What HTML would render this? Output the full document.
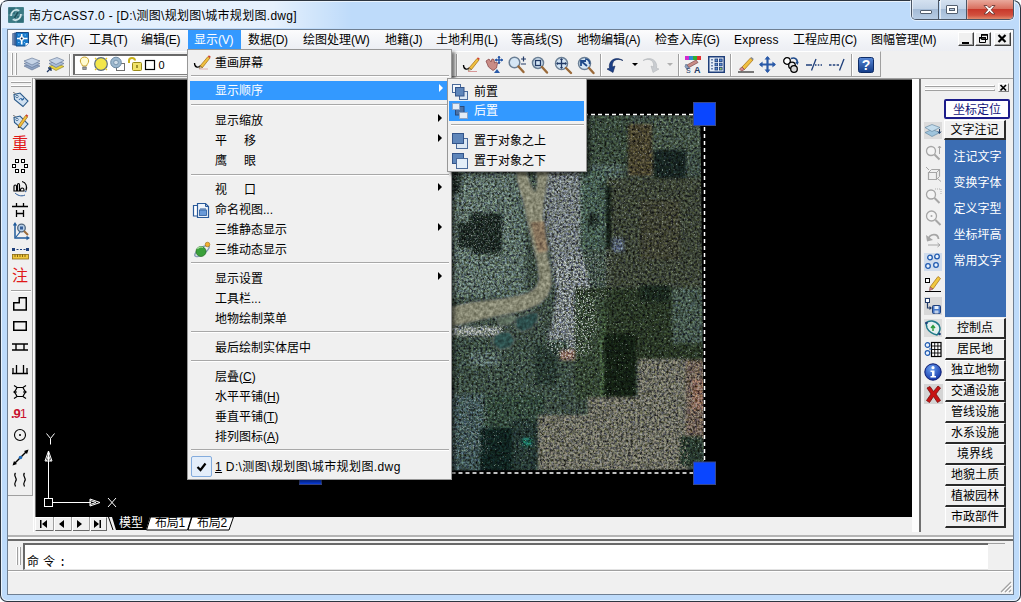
<!DOCTYPE html>
<html lang="zh-CN">
<head>
<meta charset="utf-8">
<title>南方CASS7.0</title>
<style>
*{box-sizing:border-box;margin:0;padding:0}
html,body{width:1021px;height:602px;overflow:hidden;background:#fff}
body{font-family:"Liberation Sans","Noto Sans CJK SC",sans-serif;font-size:12px;color:#000;position:relative}
.abs{position:absolute}
svg{position:absolute;overflow:visible}
#win{position:absolute;left:0;top:0;width:1021px;height:602px;border-radius:8px 8px 7px 7px;background:#bedbfa;overflow:hidden;box-shadow:inset 0 0 0 1px #2d3540, inset 0 0 0 2px #e9f3fd}
#glow{position:absolute;left:2px;top:2px;width:360px;height:26px;background:linear-gradient(90deg,rgba(255,255,255,.55) 0,rgba(255,255,255,.62) 270px,rgba(255,255,255,.3) 310px,rgba(255,255,255,0) 350px)}
#title{position:absolute;left:29px;top:7px;font-size:12px;line-height:18px;white-space:nowrap;letter-spacing:.3px}
#client{position:absolute;left:7px;top:29px;width:1007px;height:566px;background:#f0f0f0;border:1px solid #6f7f92}
#inner{position:absolute;left:8px;top:30px;width:1005px;height:564px}
/* everything below is positioned in page coords inside #pg */
#pg{position:absolute;left:0;top:0;width:1021px;height:602px}
.mi{position:absolute;top:29.500px;height:21px;line-height:20px;white-space:nowrap;font-size:12px;letter-spacing:0}
.mi i{font-style:normal;letter-spacing:-.3px}
.pm{position:absolute;background:#f0f0f0;border:1px solid #979797;box-shadow:3px 3px 3px rgba(0,0,0,.5)}
.pi{position:absolute;left:2px;right:2px;height:19px;line-height:18px;white-space:nowrap;font-size:12px}
.pi .t{position:absolute;left:24px;top:0}
.pi u{text-decoration:underline}
.sep{position:absolute;left:2px;right:2px;height:2px;border-top:1px solid #a8a8a8;border-bottom:1px solid #fff}
.arr{position:absolute;right:7px;top:5px;width:0;height:0;border-left:4px solid #000;border-top:4px solid transparent;border-bottom:4px solid transparent}
.hl{background:#3399ff;color:#fff}
.hl .arr{border-left-color:#fff}
.rb{position:absolute;left:945px;width:61px;height:21px;border-top:1px solid #fff;border-left:1px solid #fff;border-right:2px solid #2a2a2a;border-bottom:2px solid #2a2a2a;background:#f0f0f0;text-align:center;line-height:18px;font-size:12px;white-space:nowrap}
.rl{position:absolute;left:945px;width:60px;text-align:center;color:#fff;font-size:12px;line-height:14px;white-space:nowrap;padding-left:5px}
.vsep{position:absolute;width:2px;border-left:1px solid #a0a0a0;border-right:1px solid #fff}
.red{position:absolute;color:#e01818;font-size:16px;line-height:16px;left:12px;width:16px;text-align:center}
</style>
</head>
<body>
<div id="win">
<div id="glow"></div>
<div id="client"></div>
<div id="pg">
<!-- title bar -->
<svg style="left:8px;top:7px" width="16" height="16" viewBox="0 0 16 16"><rect width="16" height="16" rx="1" fill="#4d8791"/><rect x=".7" y=".7" width="6.800" height="6.800" fill="#2f6e7a"/><rect x="8.500" y="8.500" width="6.800" height="6.800" fill="#2f6e7a"/><rect x="8.500" y=".7" width="6.800" height="6.800" fill="#3b7b86"/><rect x=".7" y="8.500" width="6.800" height="6.800" fill="#3b7b86"/><path d="M8 0v16M0 8h16" stroke="#6a9fa8" stroke-width=".8"/><path d="M3 9c0-4 3-6.500 6.500-6M13 7c0 4-3 6.500-6.500 6" fill="none" stroke="#cfe4e8" stroke-width="1.800"/><path d="M9 2l3 1-2.500 2zM7 14l-3-1 2.500-2z" fill="#cfe4e8"/><path d="M10 5L6.500 11" stroke="#1f4f5a" stroke-width="1.600"/></svg>
<div id="title">南方CASS7.0 - [D:\测图\规划图\城市规划图.dwg]</div>
<!-- caption buttons -->
<div class="abs" style="left:911px;top:0;width:103px;height:20px;border:1px solid #4b5665;border-top:none;border-radius:0 0 5px 5px;overflow:hidden;box-shadow:0 0 0 1px rgba(255,255,255,.55)">
  <div class="abs" style="left:0;top:0;width:27px;height:19px;background:linear-gradient(#d4e1f0 0,#c2d3e7 45%,#a4bbd6 50%,#b7cce4 100%);border-right:1px solid #4b5665;box-shadow:inset 1px 0 0 rgba(255,255,255,.6)"></div>
  <div class="abs" style="left:28px;top:0;width:27px;height:19px;background:linear-gradient(#d4e1f0 0,#c2d3e7 45%,#a4bbd6 50%,#b7cce4 100%);border-right:1px solid #4b5665;box-shadow:inset 1px 0 0 rgba(255,255,255,.6)"></div>
  <div class="abs" style="left:55px;top:0;width:47px;height:19px;background:linear-gradient(#e9a99c 0,#d9705f 45%,#c8392b 50%,#d2503e 80%,#e08a6c 100%);box-shadow:inset 1px 0 0 rgba(255,255,255,.4)"></div>
</div>
<svg style="left:911px;top:0" width="103" height="20" viewBox="0 0 103 20">
  <rect x="9.5" y="10.5" width="11" height="3" rx=".5" fill="#fff" stroke="#535f6f"/>
  <rect x="35.500" y="5.500" width="11" height="8" rx=".5" fill="#fff" stroke="#535f6f"/><rect x="38.500" y="8.500" width="5" height="2" fill="#b9cbe0" stroke="#535f6f"/>
  <path d="M73 5.500h3l2.500 2.500 2.500-2.500h3l-3.800 4.300 3.800 4.200h-3l-2.500-2.600-2.500 2.600h-3l3.800-4.200z" fill="#fff" stroke="#6b3a36" stroke-width=".9"/>
</svg>
<!-- menubar -->
<div class="abs" style="left:8px;top:30px;width:1005px;height:21px;background:linear-gradient(#fcfcfd,#f1f3f7 60%,#eceef3)"></div>
<svg style="left:12px;top:32px" width="18" height="15" viewBox="0 0 18 15"><path d="M.5 1.500h3v11.500h-3z" fill="#8aa0c0" stroke="#4a6490" stroke-width=".6"/><path d="M2 1h3v12H2z" fill="#5a7db0" stroke="#2a4a80" stroke-width=".6"/><path d="M4 .5h12.500v10.500l-3 3H4z" fill="#1878c8" stroke="#174a86" stroke-width="1"/><path d="M16.500 11l-3 3v-3z" fill="#fff"/><path d="M9.700 2v10.500M5 6.500h10.500" stroke="#fff" stroke-width="1.700"/><circle cx="9.700" cy="6.500" r="2.300" fill="#fff"/><circle cx="9.700" cy="6.500" r="1" fill="#102040"/><path d="M6 3h1.500M12.500 3H14M6 10.500h1.500M12 10.500h1" stroke="#7cc4ff" stroke-width="1"/></svg>
<div class="mi" style="left:36px">文件<i>(F)</i></div>
<div class="mi" style="left:89px">工具<i>(T)</i></div>
<div class="mi" style="left:141px">编辑<i>(E)</i></div>
<div class="abs" style="left:187.500px;top:29.500px;width:53px;height:19.500px;background:#3399ff"></div>
<div class="mi" style="left:194px;color:#fff">显示<i>(V)</i></div>
<div class="mi" style="left:248px">数据<i>(D)</i></div>
<div class="mi" style="left:303px">绘图处理<i>(W)</i></div>
<div class="mi" style="left:385px">地籍<i>(J)</i></div>
<div class="mi" style="left:436px">土地利用<i>(L)</i></div>
<div class="mi" style="left:511px">等高线<i>(S)</i></div>
<div class="mi" style="left:577px">地物编辑<i>(A)</i></div>
<div class="mi" style="left:655px">检查入库<i>(G)</i></div>
<div class="mi" style="left:734px"><i style="letter-spacing:.2px">Express</i></div>
<div class="mi" style="left:793px">工程应用<i>(C)</i></div>
<div class="mi" style="left:871px">图幅管理<i>(M)</i></div>
<!-- MDI buttons -->
<div class="abs mdib" style="left:958px;top:32px;width:16px;height:14px"></div>
<div class="abs mdib" style="left:975px;top:32px;width:16px;height:14px"></div>
<div class="abs mdib" style="left:994px;top:32px;width:17px;height:14px"></div>
<style>.mdib{background:#f0f0f0;border:1px solid #fff;border-right-color:#404040;border-bottom-color:#404040;box-shadow:inset -1px -1px 0 #a0a0a0}</style>
<svg style="left:958px;top:32px" width="54" height="14" viewBox="0 0 54 14"><path d="M4 10h7v2H4z" fill="#000"/><path d="M23.500 2.500h6v5h-6z M21.500 5.500h6v5h-6z" fill="#f0f0f0" stroke="#000" stroke-width="1"/><path d="M23 3h7M21 6h7" stroke="#000" stroke-width="1.6"/><path d="M40.500 3l7 7M47.500 3l-7 7" stroke="#000" stroke-width="2.200"/></svg>
<!-- toolbar -->
<div class="abs" style="left:8px;top:51px;width:873px;height:26px;background:#f0f0f0;border-top:1px solid #fff;border-right:1px solid #a0a0a0;border-bottom:1px solid #a0a0a0"></div>
<div class="abs" style="left:881px;top:51px;width:132px;height:27px;background:#f0f0f0"></div>
<div class="abs" style="left:11px;top:53px;width:2px;height:22px;border-left:1px solid #fff;border-right:1px solid #a0a0a0"></div>
<div class="abs" style="left:15px;top:53px;width:2px;height:22px;border-left:1px solid #fff;border-right:1px solid #a0a0a0"></div>
<!-- layers icons -->
<svg style="left:23px;top:56px" width="18" height="16" viewBox="0 0 18 16"><path d="M1 10l8-3 8 3-8 4z" fill="#8fa3c2" stroke="#5a6f90" stroke-width=".6"/><path d="M1 7.500l8-3 8 3-8 4z" fill="#a9bbd6" stroke="#5a6f90" stroke-width=".6"/><path d="M1 5l8-3 8 3-8 4z" fill="#c5d3e6" stroke="#5a6f90" stroke-width=".6"/></svg>
<svg style="left:46px;top:56px" width="18" height="18" viewBox="0 0 18 18"><path d="M3 10.500l8-3 7 3-8 4z" fill="#e8d23c" stroke="#8a7a20" stroke-width=".6"/><path d="M3 7.500l8-3 7 3-8 4z" fill="#a9bbd6" stroke="#5a6f90" stroke-width=".6"/><path d="M3 4.500l8-3 7 3-8 4z" fill="#c5d3e6" stroke="#5a6f90" stroke-width=".6"/><path d="M1 16l4-4M5 12v3M5 12H2" stroke="#203864" stroke-width="1.300" fill="none"/></svg>
<div class="vsep" style="left:69px;top:54px;height:22px"></div>
<!-- layer combo -->
<div class="abs" style="left:73px;top:54px;width:118px;height:21px;background:#fff;border:1px solid #808080;border-top:2px solid #696969;border-left:2px solid #696969"></div>
<svg style="left:79px;top:56px" width="90" height="16" viewBox="0 0 90 16">
 <path d="M5.500 1C2.800 1 1.300 3 1.300 5c0 2 1.700 3 2.200 5h4c.5-2 2.200-3 2.200-5 0-2-1.500-4-4.200-4z" fill="#fffbd0" stroke="#c9a227" stroke-width="1"/><path d="M3.700 11h3.600v2.500H3.700z" fill="#9aa0a8" stroke="#555" stroke-width=".6"/>
 <circle cx="22" cy="8" r="6.300" fill="#f3e64a" stroke="#5a6b80" stroke-width="1.200"/><path d="M16 2l1.500 1.500M28 2l-1.500 1.500M16 14l1.500-1.500M28 14l-1.500-1.500" stroke="#e8c820" stroke-width="1.200"/>
 <rect x="37.500" y="7.500" width="8" height="7" fill="#fff" stroke="#707070"/><circle cx="37" cy="6.500" r="5.300" fill="#9db9cf" stroke="#6d8aa3" stroke-width="1"/><circle cx="37" cy="6.500" r="2.300" fill="#cfdde8" stroke="#6d8aa3" stroke-width=".8"/>
 <path d="M50 7V4.500c0-3.500 6-3.500 6 0" fill="none" stroke="#c9b21a" stroke-width="2"/><rect x="53.500" y="6.500" width="9" height="8" rx="1" fill="#f1e36a" stroke="#9a8a18"/><path d="M58 9v3" stroke="#7a6c10" stroke-width="1.400"/>
 <rect x="66.500" y="4.500" width="9" height="9" fill="#fff" stroke="#000" stroke-width="1.200"/>
</svg>
<div class="abs" style="left:158.500px;top:57px;line-height:17px;font-size:11px">0</div>
<!-- right half of toolbar -->
<div class="vsep" style="left:456px;top:54px;height:22px"></div>
<svg style="left:462px;top:56px" width="18" height="17" viewBox="0 0 18 17"><path d="M1.500 9c0 5 4.500 5 6 2.500" fill="none" stroke="#000" stroke-width="1.300"/><path d="M7 12L15 2.500l2 1.500L9.500 13.500z" fill="#f0c040" stroke="#a06a10" stroke-width=".7"/><path d="M15 2.500l2 1.500 .8-1.200-1.900-1.500z" fill="#d04030"/><path d="M7 12l-.8 2.500 3.300-1z" fill="#e9d7b0" stroke="#70501a" stroke-width=".5"/><path d="M6 15.500h9" stroke="#d08080" stroke-width=".8"/></svg>
<svg style="left:485px;top:56px" width="19" height="18" viewBox="0 0 19 18"><path d="M1 5l3-2 2 3 1-3 2 .5.500 3.500L11 6l1.500 1-1 5-3.500 2.500L3.500 11z" fill="#c98c86" stroke="#8a4a4a" stroke-width=".8"/><path d="M14 0v8M10 4h8" stroke="#2a5aa8" stroke-width="1.500"/><path d="M14 0l-1.700 2h3.400zM14 8l-1.700-2h3.400zM10 4l2-1.700v3.400zM18 4l-2-1.700v3.400z" fill="#2a5aa8"/><path d="M9 17l3-4 3 4z" fill="#2a5aa8"/></svg>
<svg style="left:508px;top:56px" width="19" height="18" viewBox="0 0 19 18"><circle cx="6.500" cy="6.500" r="5.300" fill="#d5e6f5" stroke="#6b7f95" stroke-width="1.500"/><path d="M10.500 10.500l5 5.500" stroke="#9a6a3a" stroke-width="2.400" stroke-linecap="round"/><path d="M13 3h5M15.500 .5v5M13 8h5" stroke="#223a66" stroke-width="1.200"/></svg>
<svg style="left:531px;top:56px" width="18" height="18" viewBox="0 0 18 18"><circle cx="7" cy="7" r="5.500" fill="#d5e6f5" stroke="#6b7f95" stroke-width="1.500"/><rect x="4.500" y="4.500" width="5" height="5" fill="none" stroke="#223a66" stroke-width="1.300"/><path d="M11 11l5 5.500" stroke="#9a6a3a" stroke-width="2.400" stroke-linecap="round"/></svg>
<svg style="left:554px;top:56px" width="19" height="18" viewBox="0 0 19 18"><circle cx="7.500" cy="7.500" r="6" fill="#d5e6f5" stroke="#6b7f95" stroke-width="1.500"/><path d="M7.500 3v9M3 7.500h9" stroke="#223a66" stroke-width="1.300"/><path d="M7.500 2l-1.600 2h3.200zM7.500 13l-1.600-2h3.200zM2 7.500l2-1.600v3.200zM13 7.500l-2-1.600v3.200z" fill="#223a66"/><path d="M12 12l5 5" stroke="#9a6a3a" stroke-width="2.400" stroke-linecap="round"/></svg>
<svg style="left:577px;top:56px" width="18" height="18" viewBox="0 0 18 18"><circle cx="7.500" cy="7.500" r="6" fill="#d5e6f5" stroke="#6b7f95" stroke-width="1.500"/><path d="M4 10V5h5M4 5l6 5" stroke="#1f4a8a" stroke-width="1.800" fill="none"/><path d="M8 3c3 0 5 2 4.500 5" stroke="#1f4a8a" stroke-width="1.600" fill="none"/><path d="M12 12l4.500 5" stroke="#9a6a3a" stroke-width="2.400" stroke-linecap="round"/></svg>
<div class="vsep" style="left:600px;top:54px;height:22px"></div>
<svg style="left:606px;top:57px" width="18" height="16" viewBox="0 0 18 16"><path d="M17 3.500C10 .5 5.500 4 6.500 10l2.500-1-2 6.500L1 12l2.500-.8C2 4 9 -1.500 17 3.500z" fill="#1c3f86" stroke="#10285a" stroke-width=".6"/></svg>
<div class="abs" style="left:632px;top:63px;width:0;height:0;border-top:3px solid #000;border-left:3px solid transparent;border-right:3px solid transparent"></div>
<svg style="left:642px;top:57px" width="18" height="16" viewBox="0 0 18 16"><path d="M1 3.500C8 .5 12.500 4 11.500 10l-2.500-1 2 6.500L17 12l-2.500-.8C16 4 9 -1.500 1 3.500z" fill="#c9ccd0" stroke="#b4b7bb" stroke-width=".6"/></svg>
<div class="abs" style="left:667px;top:63px;width:0;height:0;border-top:3px solid #b0b0b0;border-left:3px solid transparent;border-right:3px solid transparent"></div>
<div class="vsep" style="left:678px;top:54px;height:22px"></div>
<svg style="left:684px;top:56px" width="18" height="17" viewBox="0 0 18 17"><rect x="1" y="0" width="4" height="4" fill="#d02ad0"/><rect x="5" y="0" width="4" height="4" fill="#2a8ad0"/><rect x="9" y="0" width="4" height="4" fill="#30b030"/><rect x="13" y="0" width="4" height="4" fill="#e03030"/><path d="M3 9l9-5 2 2.500-9 5z" fill="#c98c86" stroke="#7a4a4a" stroke-width=".7"/><path d="M2 8l3 4-2 1.500-2-3z" fill="#8fa3c2" stroke="#4a5f80" stroke-width=".6"/><text x="2" y="16.500" font-size="7" font-family="Liberation Sans,sans-serif" fill="#223a66">S</text><text x="10" y="16.500" font-size="9" font-family="Liberation Sans,sans-serif" font-weight="bold" fill="#223a66">A</text></svg>
<svg style="left:708px;top:56px" width="17" height="17" viewBox="0 0 17 17"><rect x=".75" y=".75" width="15.500" height="15.500" fill="#e6eef8" stroke="#1f3f7a" stroke-width="1.500"/><path d="M4 3v11" stroke="#1f3f7a" stroke-width="1.200" stroke-dasharray="1.500 1.500"/><g fill="#5a8ad0" stroke="#1f3f7a" stroke-width=".8"><rect x="7" y="3" width="2.600" height="2.600"/><rect x="11.500" y="3" width="2.600" height="2.600"/><rect x="7" y="7.200" width="2.600" height="2.600"/><rect x="11.500" y="7.200" width="2.600" height="2.600"/><rect x="7" y="11.400" width="2.600" height="2.600"/><rect x="11.500" y="11.400" width="2.600" height="2.600" fill="#9ad06a"/></g></svg>
<div class="vsep" style="left:730px;top:54px;height:22px"></div>
<svg style="left:737px;top:56px" width="18" height="17" viewBox="0 0 18 17"><path d="M5 11L13.500 2l2.500 2-8.500 9.500z" fill="#f0c040" stroke="#a06a10" stroke-width=".7"/><path d="M5 11l2.500 2.500-3 1.500-2-2z" fill="#d78a8a" stroke="#8a4a4a" stroke-width=".7"/><path d="M13.500 2l2.500 2 .8-1-2.400-2z" fill="#808890"/><path d="M1 16h16" stroke="#000" stroke-width="1"/></svg>
<svg style="left:759px;top:56px" width="17" height="17" viewBox="0 0 17 17"><path d="M8.500 1v15M1 8.500h15" stroke="#2a5aa8" stroke-width="2.200"/><path d="M8.500 0l-3 3.600h6zM8.500 17l-3-3.600h6zM0 8.500l3.600-3v6zM17 8.500l-3.600-3v6z" fill="#2a5aa8"/></svg>
<svg style="left:782px;top:56px" width="18" height="17" viewBox="0 0 18 17"><circle cx="5" cy="5" r="3.300" fill="#fff" stroke="#000" stroke-width="1.300"/><circle cx="10" cy="9.500" r="3.300" fill="#e8e8e8" stroke="#000" stroke-width="1.300"/><circle cx="12" cy="13" r="3.300" fill="#d8d8d8" stroke="#000" stroke-width="1.300"/><path d="M9 2.500c4-1.500 7 1 6 4.500" stroke="#1f4a8a" stroke-width="1.600" fill="none"/><path d="M15.500 9l-2.300-2.800 3.600-.4z" fill="#1f4a8a"/></svg>
<svg style="left:805px;top:57px" width="18" height="15" viewBox="0 0 18 15"><path d="M1 8h6" stroke="#1f3f7a" stroke-width="1.300"/><path d="M10 8h7" stroke="#1f3f7a" stroke-width="1.300" stroke-dasharray="1.500 1.300"/><path d="M6.500 13.500L11 2" stroke="#1f3f7a" stroke-width="1.300"/></svg>
<svg style="left:828px;top:57px" width="18" height="15" viewBox="0 0 18 15"><path d="M1 8h10" stroke="#1f3f7a" stroke-width="1.300" stroke-dasharray="2.500 1.300"/><path d="M11.500 13.500L16 2" stroke="#1f3f7a" stroke-width="1.300"/></svg>
<div class="vsep" style="left:851px;top:54px;height:22px"></div>
<svg style="left:858px;top:57px" width="16" height="16" viewBox="0 0 16 16"><defs><linearGradient id="hg" x1="0" y1="0" x2="0" y2="1"><stop offset="0" stop-color="#5a8ad8"/><stop offset="1" stop-color="#123a86"/></linearGradient></defs><rect x=".5" y=".5" width="15" height="15" rx="2" fill="url(#hg)" stroke="#0e2c66"/><text x="8" y="13" text-anchor="middle" font-size="14" font-weight="bold" font-family="Liberation Sans,sans-serif" fill="#fff">?</text></svg>
<!-- drawing area -->
<div class="abs" style="left:33px;top:78px;width:881px;height:454px;background:#f0f0f0;border-top:1px solid #a0a0a0;border-left:1px solid #fff"></div>
<div class="abs" style="left:35px;top:79px;width:877px;height:438px;background:#000;border-top:1px solid #6a6a6a;border-left:1px solid #6a6a6a" id="cv"></div>
<!-- UCS icon -->
<svg style="left:35px;top:425px" width="100" height="92" viewBox="0 0 100 92"><g fill="none" stroke="#fff" stroke-width="1"><rect x="9.500" y="73.500" width="8" height="8"/><path d="M13.500 73V27M17.500 77.500H56"/><path d="M13.500 26l-3.500 10h7zM13.500 30l-2 6M13.500 30l2 6"/><path d="M65 77.500l-10-3.500v7zM61 77.500l-6-2M61 77.500l-6 2"/><path d="M11.500 8.500l4 5 4-5M15.500 13.500v6"/><path d="M73 73l8 9M81 73l-8 9"/></g></svg>
<!-- tab strip -->
<div class="abs" style="left:35px;top:517px;width:72px;height:14px;background:#f0f0f0;border:1px solid #fff;border-right-color:#696969;border-bottom-color:#696969"></div>
<svg style="left:35px;top:517px" width="210" height="14" viewBox="0 0 210 14">
 <path d="M18.500 0v14M36.500 0v14M54.500 0v14" stroke="#a0a0a0"/><path d="M19.500 0v14M37.500 0v14M55.500 0v14" stroke="#fff"/>
 <path d="M5 3v8h1.500V3zM12 3v8L7 7z M29 3v8L24 7z M42 3v8l5-4z M59 3v8l5-4zM64.500 3v8H66V3z" fill="#000"/>
 <path d="M77 0l4 13h30l4-13z" fill="#000"/>
 <path d="M115.500 0l-4 13h41l4-13z M157 0l-4 13h41l4.500-13z" fill="#fff" stroke="#000" stroke-width="1"/>
 <path d="M73.500 0l4.500 13" stroke="#000"/>
</svg>
<div class="abs" style="left:119px;top:516px;line-height:14px;font-size:12px;color:#fff">模型</div>
<div class="abs" style="left:155px;top:516px;line-height:14px;font-size:12px;letter-spacing:-.3px">布局1</div>
<div class="abs" style="left:197px;top:516px;line-height:14px;font-size:12px;letter-spacing:-.3px">布局2</div>
<!-- splitter & command area -->
<div class="abs" style="left:8px;top:532px;width:1005px;height:62px;background:#f0f0f0"></div>
<div class="abs" style="left:8px;top:535px;width:1005px;height:6px;border-top:2px solid #b4b4b4;border-bottom:2px solid #6a6a6a;background:#fafafa"></div>
<div class="abs" style="left:16px;top:547px;width:2px;height:18px;border-left:1px solid #fff;border-right:1px solid #a0a0a0"></div>
<div class="abs" style="left:19px;top:547px;width:2px;height:18px;border-left:1px solid #fff;border-right:1px solid #a0a0a0"></div>
<div class="abs" style="left:23px;top:543px;width:965px;height:27px;background:#fff;border-top:2px solid #696969;border-left:2px solid #696969;border-bottom:1px solid #e3e3e3"></div>
<div class="abs" style="left:988px;top:543px;width:17px;height:27px;background:#f0f0f0;border-top:1px solid #a0a0a0"></div>
<div class="abs" style="left:27px;top:556px;font-size:12px;line-height:14px;letter-spacing:4px;font-family:'Liberation Mono','Noto Sans CJK SC',monospace">命令:</div>
<div class="abs" style="left:8px;top:570px;width:1005px;height:1px;background:#a0a0a0"></div>
<div class="abs" style="left:8px;top:571px;width:1005px;height:1px;background:#fff"></div>
<svg style="left:1000px;top:581px" width="12" height="12" viewBox="0 0 12 12"><path d="M11 1L1 11M11 5L5 11M11 9l-2 2" stroke="#a0a0a0" stroke-width="1.200"/><path d="M12 2L2 12M12 6l-6 6M12 10l-2 2" stroke="#fff" stroke-width="1"/></svg>
<!-- left toolbar -->
<div class="abs" style="left:8px;top:78px;width:25px;height:418px;background:#f0f0f0;border-right:1px solid #a0a0a0;border-bottom:1px solid #a0a0a0"></div>
<div class="abs" style="left:11px;top:81px;width:20px;height:2px;border-top:1px solid #fff;border-bottom:1px solid #a0a0a0"></div>
<div class="abs" style="left:11px;top:85px;width:20px;height:2px;border-top:1px solid #fff;border-bottom:1px solid #a0a0a0"></div>
<svg style="left:12px;top:91px" width="17" height="17" viewBox="0 0 17 17"><path d="M2 3.500L8 2l8 8-5 5.500-8.500-7z" fill="#cfe0f0" stroke="#2a5a8a" stroke-width="1.100"/><circle cx="5" cy="5.500" r="1.200" fill="#fff" stroke="#2a5a8a" stroke-width=".8"/><path d="M7 9c1-2 3-2 4 0M11 9l.500-2M11 9l-2-.3" stroke="#1f5a9a" stroke-width="1" fill="none"/><path d="M1 1.500c1 0 2 .5 3 2" stroke="#555" stroke-width=".8" fill="none"/></svg>
<svg style="left:12px;top:113px" width="17" height="18" viewBox="0 0 17 18"><path d="M2 4.500L8 3l8 8-5 5.500-8.500-7z" fill="#cfe0f0" stroke="#2a5a8a" stroke-width="1.100"/><circle cx="5" cy="6.500" r="1.200" fill="#fff" stroke="#2a5a8a" stroke-width=".8"/><path d="M6 13L13.500 2.500l2 1.500L8 14.500z" fill="#f0c040" stroke="#a06a10" stroke-width=".7"/><path d="M13.500 2.500l2 1.500.8-1.300-1.900-1.400z" fill="#d04030"/><path d="M6 13l-.3 2.300 2.300-.8z" fill="#333"/><path d="M1 2.500c1 0 2 .5 3 2" stroke="#555" stroke-width=".8" fill="none"/></svg>
<div class="red" style="top:136px">重</div>
<svg style="left:12px;top:158px" width="16" height="16" viewBox="0 0 16 16"><g fill="#fff" stroke="#000" stroke-width="1"><rect x="3.500" y="1.500" width="3" height="3"/><rect x="9.500" y="1.500" width="3" height="3"/><rect x=".5" y="6.500" width="3" height="3"/><rect x="12.500" y="6.500" width="3" height="3"/><rect x="3.500" y="11.500" width="3" height="3"/><rect x="9.500" y="11.500" width="3" height="3"/></g></svg>
<svg style="left:12px;top:180px" width="17" height="17" viewBox="0 0 17 17"><path d="M2 11V6.500c0-2 2.500-2 2.500 0V11zM5.500 11V5c0-2 2-2 2 0v6zM8.500 11c-.5-4 4-4 3.500 0z" fill="#fff" stroke="#000" stroke-width="1.200"/><path d="M10 1.500c4 1 5.500 5 4 9" stroke="#000" stroke-width="1.200" fill="none"/><path d="M13 15c-4 2-8 0-10-2" stroke="#2a5a9a" stroke-width="1" fill="none"/><path d="M14.500 11l-2.200-.5 1.500 2z" fill="#2a5a9a"/></svg>
<svg style="left:12px;top:202px" width="16" height="16" viewBox="0 0 16 16"><path d="M0 4.500h16M4.500 1v3.500M11.500 1v3.500M4.500 8v7M11.500 8v7M4.500 11.500h7" stroke="#000" stroke-width="1.300" fill="none"/></svg>
<svg style="left:12px;top:222px" width="18" height="19" viewBox="0 0 18 19"><path d="M3 2v14h13" stroke="#1f5a9a" stroke-width="1.500" fill="none"/><path d="M3 0L.8 3.500h4.400zM18 16l-3.500-2.200v4.400z" fill="#1f5a9a"/><circle cx="9.500" cy="6" r="3.800" fill="#b5cde6" stroke="#51677f" stroke-width="1.300"/><rect x="8" y="4.500" width="3" height="3" fill="#355f9a"/><path d="M12 9l4 4" stroke="#9a6a3a" stroke-width="2"/><path d="M4 15l4-5" stroke="#1f5a9a" stroke-width="1.200"/></svg>
<svg style="left:12px;top:246px" width="17" height="14" viewBox="0 0 17 14"><path d="M1 3.500h15" stroke="#1f3f7a" stroke-width="1.200" stroke-dasharray="2 1.500"/><rect x="0" y="2" width="3" height="3" fill="#1f3f7a"/><rect x="14" y="2" width="3" height="3" fill="#1f3f7a"/><rect x=".5" y="8.500" width="16" height="4.500" fill="#f0c840" stroke="#8a6a10" stroke-width=".8"/><path d="M3 8.500v2.500M5.500 8.500v2.500M8 8.500v2.500M10.500 8.500v2.500M13 8.500v2.500" stroke="#6a4a00" stroke-width=".8"/></svg>
<div class="red" style="top:268px">注</div>
<div class="abs" style="left:11px;top:290px;width:20px;height:2px;border-top:1px solid #a0a0a0;border-bottom:1px solid #fff"></div>
<svg style="left:12px;top:296px" width="16" height="36" viewBox="0 0 16 36"><path d="M1.750 14V6.750h5.500V1.750h7V14z" fill="none" stroke="#000" stroke-width="1.500"/><rect x="1.750" y="25.750" width="12.500" height="8.500" fill="none" stroke="#000" stroke-width="1.500"/></svg>
<svg style="left:12px;top:342px" width="16" height="34" viewBox="0 0 16 34"><path d="M0 2h16M0 8h16M4 2v6M12 2v6" stroke="#000" stroke-width="1.400" fill="none"/><path d="M0 31.500h16M4.500 23v8M11.500 23v8M1 26v5M15 26v5" stroke="#000" stroke-width="1.300" fill="none"/></svg>
<svg style="left:12px;top:384px" width="16" height="16" viewBox="0 0 16 16"><path d="M2 1.500l3 2h6l3-2M5 3.500c-1 2-1 3-3 4.500 2 1.500 2 2.500 3 4.500M11 3.500c1 2 1 3 3 4.500-2 1.500-2 2.500-3 4.500M2 14.500l3-2h6l3 2M2 8h3M11 8h3" stroke="#000" stroke-width="1.200" fill="none"/></svg>
<div class="abs" style="left:11px;top:406px;font-size:13px;line-height:15px;font-weight:bold;color:#c8102e;letter-spacing:-1px;font-family:'Liberation Sans',sans-serif">.9<span style="font-weight:normal">1</span></div>
<svg style="left:13px;top:428px" width="14" height="14" viewBox="0 0 14 14"><circle cx="7" cy="7" r="5.500" fill="none" stroke="#000" stroke-width="1.100"/><circle cx="7" cy="7" r="1" fill="#000"/></svg>
<svg style="left:12px;top:449px" width="17" height="17" viewBox="0 0 17 17"><path d="M2 15L15 2" stroke="#000" stroke-width="1.500"/><path d="M16.500 .5l-4.500 1.500 3 3zM.5 16.500l4.500-1.500-3-3z" fill="#000"/><circle cx="8.500" cy="8.500" r="1.800" fill="#1f6ab8"/></svg>
<svg style="left:12px;top:472px" width="16" height="16" viewBox="0 0 16 16"><path d="M3.500 1c-3 3.500 3 5 0 8.500-1 1.500-1 3 0 5M12.500 1c-3 3.500 3 5 0 8.500-1 1.500-1 3 0 5" stroke="#000" stroke-width="1.200" fill="none"/></svg>
<!-- right panel -->
<div class="abs" style="left:913px;top:78px;width:100px;height:454px;background:#f0f0f0;border-top:1px solid #a0a0a0"></div>
<div class="abs" style="left:912px;top:79px;width:7px;height:453px;background:#fcfcfc"></div><div class="abs" style="left:919px;top:79px;width:1.500px;height:453px;background:#707070"></div>
<div class="abs" style="left:925px;top:85px;width:70px;height:2px;border-top:1px solid #fff;border-bottom:1px solid #a0a0a0;border-right:1px solid #a0a0a0"></div>
<div class="abs" style="left:925px;top:89px;width:70px;height:2px;border-top:1px solid #fff;border-bottom:1px solid #a0a0a0;border-right:1px solid #a0a0a0"></div>
<div class="abs" style="left:998px;top:83px;width:11px;height:9px;border-right:1px solid #808080;border-bottom:1px solid #808080;border-top:1px solid #fff;border-left:1px solid #fff"></div>
<svg style="left:999px;top:84px" width="9" height="8" viewBox="0 0 9 8"><path d="M1.500 1l5.500 5.500M7 1L1.500 6.500" stroke="#000" stroke-width="1.700"/></svg>
<div class="abs" style="left:944px;top:99px;width:66px;height:20px;background:#fff;border:2px solid #1c1c8a;border-radius:2px;color:#14147a;text-align:center;line-height:18px;font-size:12px">坐标定位</div>
<div class="rb" style="top:120px;left:944px;width:62px;height:20px">文字注记</div>
<div class="abs" style="left:945px;top:140px;width:61px;height:177px;background:#3b6db3"></div>
<div class="rl" style="top:150px">注记文字</div>
<div class="rl" style="top:176px">变换字体</div>
<div class="rl" style="top:202px">定义字型</div>
<div class="rl" style="top:228px">坐标坪高</div>
<div class="rl" style="top:254px">常用文字</div>
<div class="rb" style="top:318px">控制点</div>
<div class="rb" style="top:339px">居民地</div>
<div class="rb" style="top:360px">独立地物</div>
<div class="rb" style="top:381px">交通设施</div>
<div class="rb" style="top:402px">管线设施</div>
<div class="rb" style="top:423px">水系设施</div>
<div class="rb" style="top:444px">境界线</div>
<div class="rb" style="top:465px">地貌土质</div>
<div class="rb" style="top:486px">植被园林</div>
<div class="rb" style="top:507px">市政部件</div>
<!-- right icon column -->
<div class="abs" style="left:924px;top:122px;width:18px;height:17px;background:#dcdcdc"></div>
<svg style="left:924px;top:122px" width="18" height="17" viewBox="0 0 18 17"><path d="M1 10.500l7-3 8 3-8 4z" fill="#9fc4dc" stroke="#5a7f9a" stroke-width=".6"/><path d="M1 5.500l7-3 8 3-8 4z" fill="#c3dcec" stroke="#5a7f9a" stroke-width=".6"/><path d="M15.500 7v4M14 9.500l1.500 2 1.500-2" stroke="#1f3f6a" stroke-width="1" fill="none"/></svg>
<svg style="left:925px;top:145px" width="17" height="16" viewBox="0 0 17 16"><circle cx="6" cy="6" r="4.500" fill="#f4f4f4" stroke="#a6a6a6" stroke-width="1.300"/><path d="M9.500 9.500l5 5" stroke="#a6a6a6" stroke-width="2"/><path d="M14.500 1v8M13 3l1.500-2 1.500 2" stroke="#a6a6a6" stroke-width="1" fill="none"/></svg>
<svg style="left:925px;top:166px" width="17" height="16" viewBox="0 0 17 16"><path d="M3.500 6.500h8v7h-8zM6.500 3.500h8v7" fill="none" stroke="#a6a6a6" stroke-width="1.200"/><path d="M3.500 6.500l3-3M11.500 6.500l3-3M11.500 13.500l3-3" stroke="#a6a6a6" stroke-width="1"/><path d="M1 1l3 3M13 13l3 2.500" stroke="#a6a6a6" stroke-width="1"/></svg>
<svg style="left:925px;top:188px" width="17" height="16" viewBox="0 0 17 16"><circle cx="6" cy="6.500" r="4.500" fill="#f4f4f4" stroke="#a6a6a6" stroke-width="1.300"/><path d="M9.500 10l5 5" stroke="#a6a6a6" stroke-width="2"/><path d="M10 1h6v6" stroke="#b0b0b0" stroke-width="1" stroke-dasharray="1 1" fill="none"/></svg>
<svg style="left:925px;top:210px" width="17" height="16" viewBox="0 0 17 16"><circle cx="6.500" cy="6" r="5" fill="#f4f4f4" stroke="#a6a6a6" stroke-width="1.300"/><circle cx="6.500" cy="6" r="1" fill="#a6a6a6"/><path d="M10.500 10l5 5" stroke="#a6a6a6" stroke-width="2"/></svg>
<svg style="left:925px;top:232px" width="17" height="15" viewBox="0 0 17 15"><path d="M3 7.500C5 1 13 1 13.500 7" stroke="#a6a6a6" stroke-width="1.800" fill="none"/><path d="M1 3l1 6.500L8 8z" fill="#a6a6a6"/><path d="M3 13h12M12.500 11l2.500 2-2.500 2" stroke="#a6a6a6" stroke-width="1" fill="none"/></svg>
<div class="abs" style="left:924px;top:253px;width:18px;height:18px;background:#d0dcec"></div>
<svg style="left:924px;top:253px" width="18" height="18" viewBox="0 0 18 18"><g fill="#e8f0fa" stroke="#1f5ab0" stroke-width="1.300"><circle cx="6" cy="4.500" r="2.300"/><circle cx="13" cy="3.500" r="2.300"/><circle cx="4" cy="13" r="2.300"/><circle cx="12" cy="12" r="2.300"/></g></svg>
<svg style="left:924px;top:275px" width="18" height="18" viewBox="0 0 18 18"><rect x="1.500" y="3.500" width="4" height="4" fill="#fff" stroke="#000"/><path d="M6 12L14 1.500l2.500 2L9 14z" fill="#f0c840" stroke="#a06a10" stroke-width=".7"/><path d="M6 12l3 2-3.500 1.500z" fill="#d78a8a" stroke="#8a4a4a" stroke-width=".6"/><path d="M1 16.500h16" stroke="#000" stroke-width="1"/></svg>
<div class="abs" style="left:924px;top:297px;width:18px;height:18px;background:#d8d8d8"></div>
<svg style="left:924px;top:297px" width="18" height="18" viewBox="0 0 18 18"><rect x="1.500" y="1.500" width="4" height="4" fill="#fff" stroke="#223a66"/><path d="M3.500 6v5h3" stroke="#223a66" stroke-width="1.200" fill="none"/><path d="M8 9l-2.500 2L8 13z" fill="#223a66" transform="rotate(180 6.750 11)"/><rect x="8.500" y="8.500" width="8" height="8" rx="1" fill="#4a7ac8" stroke="#1f3f7a"/><rect x="10.500" y="9" width="4" height="3" fill="#e8f0fa"/><rect x="10.500" y="13.500" width="4" height="3" fill="#c0d0e8"/></svg>
<div class="abs" style="left:924px;top:319px;width:18px;height:18px;background:#dcdcdc"></div>
<svg style="left:924px;top:319px" width="18" height="18" viewBox="0 0 18 18"><path d="M2 4c3-3 9-3 13 2 2 4 0 8-2 10-4-1-8-3-10-7z" fill="#e4f0f0" stroke="#1f7a8a" stroke-width="1.500"/><path d="M9 12V7M7 9l2-2.500L11 9" stroke="#2a9a3a" stroke-width="1.400" fill="none"/><circle cx="2.500" cy="4" r="1.300" fill="#1f3f7a"/><circle cx="15.500" cy="15" r="1.300" fill="#1f3f7a"/></svg>
<svg style="left:924px;top:341px" width="18" height="17" viewBox="0 0 18 17"><circle cx="3.500" cy="4" r="2.300" fill="#e8f0fa" stroke="#1f5ab0" stroke-width="1.200"/><circle cx="3.500" cy="12" r="2.300" fill="#e8f0fa" stroke="#1f5ab0" stroke-width="1.200"/><rect x="7.500" y="1.500" width="9.500" height="14" fill="#fff" stroke="#000" stroke-width="1.200"/><path d="M8 5h9M8 8.500h9M8 12h9M10.700 2v13M13.900 2v13" stroke="#000" stroke-width=".9"/><path d="M5 8h2.500" stroke="#1f5ab0"/></svg>
<svg style="left:924px;top:363px" width="18" height="18" viewBox="0 0 18 18"><defs><radialGradient id="ig" cx=".4" cy=".3" r=".8"><stop offset="0" stop-color="#6aa0f0"/><stop offset="1" stop-color="#0a2aa0"/></radialGradient></defs><circle cx="9" cy="9" r="8.200" fill="url(#ig)" stroke="#0a1a70" stroke-width="1"/><circle cx="9" cy="4.700" r="1.600" fill="#fff"/><path d="M6.500 7.500h4v5.500h1.500v1.500h-5.500v-1.500h1.500v-4h-1.500z" fill="#fff"/></svg>
<div class="abs" style="left:924px;top:384px;width:19px;height:20px;background:#d4d4d4"></div>
<svg style="left:924px;top:384px" width="19" height="20" viewBox="0 0 19 20"><path d="M3 4l3-1.500 3.500 5L14 2l2.500 2-4.500 6 4.500 6.500-3 2-4-6-4 6-3-2 4.500-6.500z" fill="#c81414" stroke="#7a0a0a" stroke-width=".8"/></svg>
<!-- raster image object on canvas (approximated) -->
<svg style="left:0;top:0" width="1021" height="602" viewBox="0 0 1021 602">
<defs>
  <clipPath id="imgclip"><path d="M311 115.500H700.500L704 469.500 311 471z"/></clipPath>
  <filter id="b3" x="-20%" y="-20%" width="140%" height="140%"><feGaussianBlur stdDeviation="2.200"/></filter>
  <filter id="b1" x="-20%" y="-20%" width="140%" height="140%"><feGaussianBlur stdDeviation="1"/></filter>
  <filter id="tex" filterUnits="userSpaceOnUse" x="300" y="105" width="420" height="380" color-interpolation-filters="sRGB">
    <feGaussianBlur in="SourceGraphic" stdDeviation="1.600" result="b"/>
    <feTurbulence type="fractalNoise" baseFrequency=".42" numOctaves="3" seed="3" result="n"/>
    <feColorMatrix in="n" type="matrix" values="1.050 .2 0 0 -.15  1.050 .2 0 0 -.15  1.050 0 .2 0 -.15  0 0 0 0 1" result="g"/>
    <feBlend in="g" in2="b" mode="overlay" result="o"/>
    <feColorMatrix in="o" type="saturate" values="1.2" result="o2"/>
    <feComponentTransfer in="o2"><feFuncR type="linear" slope=".94"/><feFuncG type="linear" slope=".94"/><feFuncB type="linear" slope=".94"/></feComponentTransfer>
  </filter>
  <filter id="wtr" filterUnits="userSpaceOnUse" x="300" y="105" width="420" height="380" color-interpolation-filters="sRGB">
    <feGaussianBlur in="SourceGraphic" stdDeviation=".9" result="b"/>
    <feTurbulence type="fractalNoise" baseFrequency=".3" numOctaves="2" seed="9" result="n"/>
    <feColorMatrix in="n" type="matrix" values=".5 0 0 0 .25  .5 0 0 0 .25  .5 0 0 0 .25  0 0 0 0 1" result="g"/>
    <feBlend in="g" in2="b" mode="overlay" result="o"/>
    <feComposite in="o" in2="b" operator="in"/>
  </filter>
  <filter id="spW" filterUnits="userSpaceOnUse" x="300" y="105" width="420" height="380" color-interpolation-filters="sRGB">
    <feTurbulence type="fractalNoise" baseFrequency=".55" numOctaves="2" seed="7" result="n"/>
    <feColorMatrix in="n" type="matrix" values="0 0 0 0 .8  0 0 0 0 .84  0 0 0 0 .82  10 0 0 0 -6.800"/>
  </filter>
  <filter id="spW2" filterUnits="userSpaceOnUse" x="300" y="105" width="420" height="380" color-interpolation-filters="sRGB">
    <feTurbulence type="fractalNoise" baseFrequency=".6" numOctaves="2" seed="23" result="n"/>
    <feColorMatrix in="n" type="matrix" values="0 0 0 0 .86  0 0 0 0 .88  0 0 0 0 .88  0 8 0 0 -4.500"/>
  </filter>
  <filter id="spT" filterUnits="userSpaceOnUse" x="300" y="105" width="420" height="380" color-interpolation-filters="sRGB">
    <feTurbulence type="fractalNoise" baseFrequency=".45" numOctaves="2" seed="5" result="n"/>
    <feColorMatrix in="n" type="matrix" values="0 0 0 0 .62  0 0 0 0 .59  0 0 0 0 .53  0 6 0 0 -3.200"/>
  </filter>
  <mask id="urban"><rect x="300" y="100" width="420" height="380" fill="#000"/><g filter="url(#b3)" fill="#fff">
    <path d="M548 172h36v40l-2 50h-30l-2-50z" opacity=".55"/><path d="M552 258h32l10 34 4 40-8 22-26 6-18-12 8-26 4-30z"/>
    <path d="M452 172h60v40l10 50-20 30h-50z" opacity=".4"/>
    <path d="M455 326h50v10h-50z"/><path d="M580 250h30v50h-30z" opacity=".5"/>
    <path d="M452 395h36v60h-36z" opacity=".4"/>
  </g></mask>
  <mask id="tanm"><rect x="300" y="100" width="420" height="380" fill="#000"/><g filter="url(#b1)" fill="#fff">
    <path d="M538 415h50v-18h50v-38h50v112H538z"/><path d="M686 360h18v80h-18z"/>
  </g></mask>
</defs>
<g clip-path="url(#imgclip)">
 <g filter="url(#tex)">
  <rect x="305" y="110" width="405" height="368" fill="#44524a"/>
  <!-- top band -->
  <rect x="580" y="112" width="50" height="54" fill="#3f4e42"/>
  <rect x="628" y="124" width="25" height="52" fill="#4d4937"/>
  <rect x="652" y="112" width="52" height="40" fill="#4a584d"/>
  <path d="M654 150h32v42l-14 4-18-10z" fill="#1c2825"/>
  <rect x="586" y="164" width="36" height="36" fill="#55665f"/>
  <!-- left of river upper -->
  <rect x="448" y="168" width="78" height="130" fill="#5f7069"/>
  <path d="M458 222h12v-9h32v41h-30v-6h-14z" fill="#1e2924"/>
  <rect x="452" y="172" width="9" height="22" fill="#232e29"/>
  <!-- urban right of river -->
  <path d="M548 170h36v42l-2 40 10 40 4 40-8 22-26 6-18-12 8-26 4-30-6-40-8-40z" fill="#747c7d"/>
  <rect x="580" y="170" width="26" height="80" fill="#4d6157"/>
  <rect x="606" y="178" width="96" height="112" fill="#42493d"/>
  <rect x="606" y="186" width="5" height="62" fill="#141d17"/>
  <rect x="588" y="214" width="10" height="12" fill="#25302a"/>
  <rect x="640" y="200" width="40" height="60" fill="#44473a"/>
  <rect x="612" y="238" width="12" height="14" fill="#5f6a78"/>
  <!-- below river -->
  <rect x="448" y="327" width="52" height="9" fill="#8a918c"/>
  <rect x="448" y="340" width="120" height="60" fill="#43534a"/>
  <rect x="560" y="350" width="16" height="10" fill="#8f7468"/>
  <rect x="535" y="345" width="22" height="40" fill="#2f3e37"/>
  <rect x="470" y="352" width="30" height="14" fill="#5c6d68"/>
  <!-- right middle dark -->
  <rect x="575" y="288" width="130" height="74" fill="#2f3b2c"/>
  <rect x="575" y="296" width="30" height="104" fill="#3b4a3a"/>
  <rect x="604" y="334" width="32" height="64" fill="#182318"/>
  <rect x="672" y="288" width="32" height="56" fill="#4b5b52"/>
  <rect x="640" y="285" width="30" height="16" fill="#1f2b22"/>
  <path d="M604 310c3 20-6 30-2 50s-4 30 2 40" stroke="#55704f" stroke-width="2" fill="none"/>
  <!-- bottom -->
  <rect x="448" y="395" width="36" height="80" fill="#455858"/>
  <rect x="484" y="395" width="60" height="34" fill="#3a4d42"/>
  <rect x="480" y="428" width="34" height="46" fill="#152623"/>
  <rect x="512" y="420" width="28" height="54" fill="#2b3b37"/>
  <rect x="522" y="438" width="10" height="8" fill="#2a6f60"/>
  <path d="M538 415h50v-18h50v-38h50v112H538z" fill="#6a6c62"/>
  <rect x="686" y="360" width="20" height="78" fill="#6a5d54"/>
  <rect x="692" y="380" width="12" height="30" fill="#86695c"/>
  <path d="M680 436h22v30h-22z" fill="#2f3e34"/>
 </g>
  <!-- speckle texture -->
  <rect x="311" y="114" width="395" height="360" filter="url(#spW)" opacity=".45"/>
  <g mask="url(#urban)" opacity=".72"><rect x="311" y="114" width="395" height="360" filter="url(#spW2)"/></g>
  <g mask="url(#tanm)" opacity=".8"><rect x="311" y="114" width="395" height="360" filter="url(#spT)"/></g>
  <!-- river & lakes (smooth water) -->
  <g filter="url(#wtr)">
    <path d="M516 170h10l4 12 5 10 2-8-1-14h13l-3 20-2 12-1 16 1 16 3 18 4 18 1 14-4 12-8 8-16 7-30 6-26 6-22 5v-20l26-6 34-4 22-5 8-6 3-8-2-16-5-20-5-22-4-20-5-16z" fill="#878873"/>
    <path d="M531 222l14-1 1 14 3 16-11 2-4-16z" fill="#86735c"/>
    <path d="M516 318l8-2 6-3 8-1 0 8-6 8-10 4-6-4z" fill="#2c4c4a"/>
    <path d="M494 336l8-4 8 0 5 8-4 7-10 3-8-5z" fill="#2e504d"/>
    <path d="M496 318l18-3 2 6-16 6z" fill="#5d6e5e"/>
  </g>
</g>
<!-- selection dashed frame -->
<path d="M311 114.500H704.500V473H311z" fill="none" stroke="#fff" stroke-width="1.500" stroke-dasharray="4 3"/>
<!-- grips -->
<rect x="693.500" y="102.500" width="22" height="23" fill="#0a46ff" stroke="#3a4a8a" stroke-width="1"/>
<rect x="693.500" y="462" width="22" height="22.500" fill="#0a46ff" stroke="#3a4a8a" stroke-width="1"/>
<rect x="299.500" y="462" width="22" height="22.500" fill="#0a46ff" stroke="#3a4a8a" stroke-width="1"/>
<rect x="299.500" y="102.500" width="22" height="23" fill="#0a46ff" stroke="#3a4a8a" stroke-width="1"/>
</svg>
<!-- main dropdown -->
<div class="pm" style="left:187px;top:49px;width:265px;height:431px">
  <div class="pi" style="top:4px"><span class="t" style="left:25px">重画屏幕</span></div>
  <div class="sep" style="top:25px;left:3px"></div>
  <div class="pi hl" style="top:31px;height:19px;line-height:20px"><span class="t" style="left:25px">显示顺序</span><span class="arr" style="right:6px;top:3px"></span></div>
  <div class="sep" style="top:54px;left:3px"></div>
  <div class="pi" style="top:62px"><span class="t" style="left:25px">显示缩放</span><span class="arr" style="right:7px;top:2px"></span></div>
  <div class="pi" style="top:82px"><span class="t" style="left:25px">平<span style="display:inline-block;width:17px"></span>移</span><span class="arr" style="right:7px;top:2px"></span></div>
  <div class="pi" style="top:102px"><span class="t" style="left:25px">鹰<span style="display:inline-block;width:17px"></span>眼</span></div>
  <div class="sep" style="top:124px;left:3px"></div>
  <div class="pi" style="top:131px"><span class="t" style="left:25px">视<span style="display:inline-block;width:17px"></span>口</span><span class="arr" style="right:7px;top:2px"></span></div>
  <div class="pi" style="top:151px"><span class="t" style="left:25px">命名视图...</span></div>
  <div class="pi" style="top:171px"><span class="t" style="left:25px">三维静态显示</span><span class="arr" style="right:7px;top:2px"></span></div>
  <div class="pi" style="top:191px"><span class="t" style="left:25px">三维动态显示</span></div>
  <div class="sep" style="top:212px;left:3px"></div>
  <div class="pi" style="top:220px"><span class="t" style="left:25px">显示设置</span><span class="arr" style="right:7px;top:2px"></span></div>
  <div class="pi" style="top:240px"><span class="t" style="left:25px">工具栏...</span></div>
  <div class="pi" style="top:260px"><span class="t" style="left:25px">地物绘制菜单</span></div>
  <div class="sep" style="top:281px;left:3px"></div>
  <div class="pi" style="top:289px"><span class="t" style="left:25px">最后绘制实体居中</span></div>
  <div class="sep" style="top:310px;left:3px"></div>
  <div class="pi" style="top:318px"><span class="t" style="left:25px">层叠(<u>C</u>)</span></div>
  <div class="pi" style="top:338px"><span class="t" style="left:25px">水平平铺(<u>H</u>)</span></div>
  <div class="pi" style="top:358px"><span class="t" style="left:25px">垂直平铺(<u>T</u>)</span></div>
  <div class="pi" style="top:378px"><span class="t" style="left:25px">排列图标(<u>A</u>)</span></div>
  <div class="sep" style="top:399px;left:3px"></div>
  <div class="abs" style="left:3px;top:406px;width:21px;height:21px;background:#e4eefa;border:1px solid #84acdd;border-radius:2px"></div>
  <svg style="left:8px;top:412px" width="11" height="10" viewBox="0 0 11 10"><path d="M1.500 5l3 3L9.500 1.500" stroke="#000" stroke-width="2.200" fill="none"/></svg>
  <div class="pi" style="top:408px"><span class="t" style="left:25px;letter-spacing:.4px"><u>1</u> D:\测图\规划图\城市规划图.dwg</span></div>
  <!-- icons -->
  <svg style="left:5px;top:5px" width="18" height="15" viewBox="0 0 18 15"><path d="M1.500 8c0 5 4.500 5 6 2.500" fill="none" stroke="#000" stroke-width="1.300"/><path d="M7 11L15 1.500l2 1.500L9.500 12.500z" fill="#f0c040" stroke="#a06a10" stroke-width=".7"/><path d="M15 1.500l2 1.500.8-1.200-1.900-1.500z" fill="#d04030"/><path d="M7 11l-.8 2.500 3.300-1z" fill="#e9d7b0" stroke="#70501a" stroke-width=".5"/><path d="M6 14h9" stroke="#d8a0a0" stroke-width=".8"/></svg>
  <svg style="left:4px;top:152px" width="18" height="17" viewBox="0 0 18 17"><path d="M1.500 3.500h6l1.500 1.500v9h-7.500z" fill="#fff" stroke="#2a5a9a" stroke-width="1.200"/><path d="M5.500 1.500h8l3 3v11h-11z" fill="#eef4fb" stroke="#2a5a9a" stroke-width="1.200"/><path d="M13.500 1.500v3h3" fill="none" stroke="#2a5a9a" stroke-width="1"/><rect x="7.500" y="8" width="7" height="5.500" fill="#6a9ad8" stroke="#2a5a9a" stroke-width=".8"/><path d="M8 7h6" stroke="#2a5a9a" stroke-width="1"/></svg>
  <svg style="left:5px;top:191px" width="18" height="18" viewBox="0 0 18 18"><ellipse cx="9" cy="10" rx="8.500" ry="3.200" transform="rotate(-35 9 10)" fill="none" stroke="#8aa0b8" stroke-width="1.500"/><circle cx="8" cy="10.500" r="5" fill="#3aa03a" stroke="#1f6a1f" stroke-width=".7"/><path d="M4.500 8c1-2 4-2.500 5.500-1.500" stroke="#a8e0a0" stroke-width="1.200" fill="none"/><circle cx="14.500" cy="3.500" r="2.300" fill="#f0b030" stroke="#a06a10" stroke-width=".6"/></svg>
</div>
<!-- submenu -->
<div class="pm" style="left:447px;top:78px;width:140px;height:94px">
  <div class="pi" style="top:3px;height:20px;line-height:20px"><span class="t" style="left:24px">前置</span></div>
  <div class="pi hl" style="top:22px;left:1px;right:2px;height:20px;line-height:20px"><span class="t" style="left:25px">后置</span></div>
  <div class="sep" style="top:45px;left:3px"></div>
  <div class="pi" style="top:52px;height:20px;line-height:20px"><span class="t" style="left:24px">置于对象之上</span></div>
  <div class="pi" style="top:72px;height:20px;line-height:20px"><span class="t" style="left:24px">置于对象之下</span></div>
  <svg style="left:4px;top:5px" width="16" height="16" viewBox="0 0 16 16"><rect x=".5" y=".5" width="8" height="8" fill="#f4f8fc" stroke="#4a6a9a"/><rect x="7.500" y="7.500" width="8" height="8" fill="#dce8f4" stroke="#4a6a9a"/><rect x="3.500" y="3.500" width="8.500" height="8.500" fill="#5f86ba" stroke="#34558a"/></svg>
  <svg style="left:4px;top:24px" width="16" height="16" viewBox="0 0 16 16"><rect x="3.500" y="3.500" width="8.500" height="8.500" fill="#4a72a8" stroke="#2a4a7a"/><rect x=".5" y=".5" width="7" height="6" fill="#e4ecf6" stroke="#8aa4c8"/><rect x="7.500" y="9.500" width="8" height="6" fill="#e4ecf6" stroke="#8aa4c8"/></svg>
  <svg style="left:4px;top:54px" width="16" height="16" viewBox="0 0 16 16"><rect x="4.500" y="5.500" width="11" height="10" fill="#dce8f4" stroke="#4a6a9a"/><rect x=".5" y=".5" width="11" height="10" fill="#5f86ba" stroke="#34558a"/></svg>
  <svg style="left:4px;top:74px" width="16" height="16" viewBox="0 0 16 16"><rect x=".5" y=".5" width="11" height="10" fill="#5f86ba" stroke="#34558a"/><rect x="4.500" y="5.500" width="11" height="10" fill="#e4eef8" stroke="#4a6a9a"/></svg>
</div>
</div>
</div>
</body>
</html>
